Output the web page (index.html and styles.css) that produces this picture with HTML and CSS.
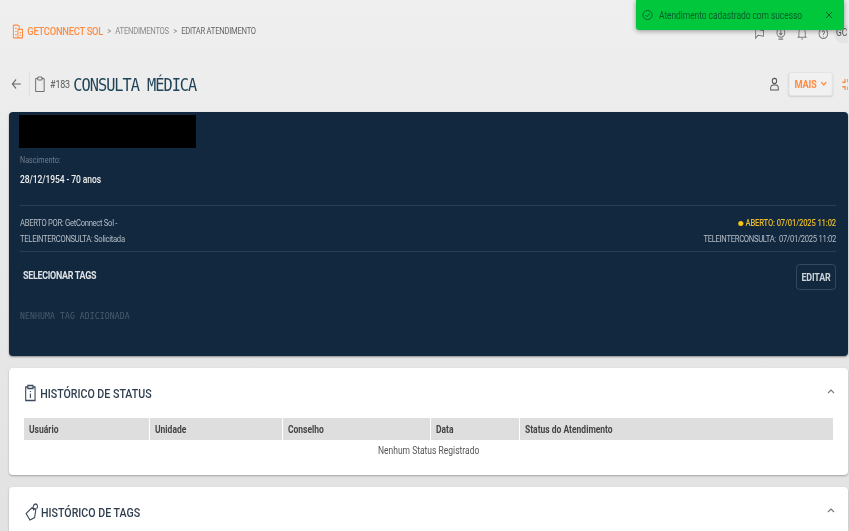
FILE: index.html
```html
<!DOCTYPE html>
<html lang="pt-BR">
<head>
    <meta charset="UTF-8">
    <meta name="viewport" content="width=device-width, initial-scale=1.0">
    <title>Editar atendimento</title>
    <link rel="stylesheet" href="styles.css">
</head>
<body>
    <div class="page">
        <header class="topbar">
            <nav class="crumbs squeeze">
                <svg class="crumb-icon" viewBox="0 0 12 14" width="14" height="15" fill="none" stroke="#ff8c42" stroke-width="1.1"><path d="M1 1h5l1.500 1.500V5M1 1v12h10V5H6v8M3 4h1.500M3 7h1.500M3 10h1.500M8 8h1.500M8 10.500h1.500"/></svg>
                <span class="crumb-brand">GETCONNECT SOL</span>
                <span class="crumb-sep">&gt;</span>
                <span class="crumb-link">ATENDIMENTOS</span>
                <span class="crumb-sep">&gt;</span>
                <span class="crumb-current">EDITAR ATENDIMENTO</span>
            </nav>
            <div class="top-icons squeeze-right">
                <svg viewBox="0 0 14 14" width="14" height="13" fill="none" stroke="#777" stroke-width="1.1"><path d="M2 2l10 2v6L5 9l-3 3zM2 2v10"/></svg>
                <svg viewBox="0 0 14 14" width="14" height="13" fill="none" stroke="#777" stroke-width="1.2"><circle cx="7" cy="6" r="5"/><path d="M7 3v5M5 6.500l2 2 2-2M4 13h6"/></svg>
                <svg viewBox="0 0 14 14" width="14" height="13" fill="none" stroke="#777" stroke-width="1.1"><path d="M3 10V6a4 4 0 0 1 8 0v4l1 1H2zM6 13h2"/></svg>
                <svg viewBox="0 0 14 14" width="14" height="13" fill="none" stroke="#777" stroke-width="1.1"><circle cx="7" cy="7" r="5.500"/><path d="M5.500 5.500a1.500 1.500 0 1 1 2 1.500L7 8.500M7 10v1"/></svg>
                <span class="avatar">GC</span>
            </div>
        </header>

        <div class="titlebar">
            <div class="title-left squeeze">
                <svg class="back" viewBox="0 0 12 12" width="13" height="12" fill="none" stroke="#666" stroke-width="1.1"><path d="M11 6H1M5.500 1.500L1 6l4.500 4.500"/></svg>
                <span class="title-div"></span>
                <svg class="clip" viewBox="0 0 12 16" width="12" height="16" fill="none" stroke="#666" stroke-width="1"><path d="M3.500 2.500H1v13h10v-13H8.500M3.500 4V1h5v3z"/></svg>
                <span class="ticket">#183</span>
                <h1 class="title">CONSULTA MÉDICA</h1>
            </div>
            <div class="title-actions squeeze-right">
                <svg viewBox="0 0 12 14" width="13" height="14" fill="none" stroke="#555" stroke-width="1.1"><circle cx="6" cy="4" r="2.600"/><path d="M1.500 13v-2a3 3 0 0 1 3-3h3a3 3 0 0 1 3 3v2z"/></svg>
                <button class="more">MAIS <svg viewBox="0 0 8 6" width="9" height="6" fill="none" stroke="#ff8c42" stroke-width="1.400"><path d="M1 1l3 3 3-3"/></svg></button>
                <svg viewBox="0 0 7 12" width="8" height="13" fill="none" stroke="#ff8c42" stroke-width="1.400"><path d="M1 4L4 4 4 1M7 1L7 4M1 8L4 8 4 11M7 8L7 11"/></svg>
            </div>
        </div>

        <section class="patient">
            <div class="redacted"></div>
            <div class="birth">
                <p class="birth-label squeeze">Nascimento:</p>
                <p class="birth-value squeeze">28/12/1954 - 70 anos</p>
            </div>
            <div class="opened">
                <div class="squeeze">
                    <p>ABERTO POR: GetConnect Sol -</p>
                    <p>TELEINTERCONSULTA: Solicitada</p>
                </div>
                <div class="opened-right squeeze-right">
                    <p class="opened-status"><span class="dot"></span>ABERTO: 07/01/2025 11:02</p>
                    <p>TELEINTERCONSULTA:&nbsp; 07/01/2025 11:02</p>
                </div>
            </div>
            <div class="tags-head">
                <span class="tags-title squeeze">SELECIONAR TAGS</span>
                <button class="edit squeeze-right">EDITAR</button>
            </div>
            <p class="tags-empty squeeze">NENHUMA TAG ADICIONADA</p>
        </section>

        <section class="card">
            <div class="card-head">
                <div class="card-title squeeze">
                    <svg viewBox="0 0 14 18" width="15" height="18" fill="none" stroke="#3b4a5a" stroke-width="1.300"><path d="M4 3H1.500v13.500h11V3H10M4 4.500V1.500h6v3zM7 7v1M7 9.500V14"/></svg>
                    <h2>HISTÓRICO DE STATUS</h2>
                </div>
                <svg class="caret" viewBox="0 0 8 6" width="8" height="6" fill="none" stroke="#777" stroke-width="1.100"><path d="M1 5l3-3 3 3"/></svg>
            </div>
            <table class="status-table">
                <thead>
                    <tr>
                        <th class="col-user"><span class="cell squeeze">Usuário</span></th>
                        <th class="col-unit"><span class="cell squeeze">Unidade</span></th>
                        <th class="col-board"><span class="cell squeeze">Conselho</span></th>
                        <th class="col-date"><span class="cell squeeze">Data</span></th>
                        <th><span class="cell squeeze">Status do Atendimento</span></th>
                    </tr>
                </thead>
                <tbody>
                    <tr><td colspan="5"><span class="cell squeeze-center">Nenhum Status Registrado</span></td></tr>
                </tbody>
            </table>
        </section>

        <section class="card">
            <div class="card-head">
                <div class="card-title squeeze">
                    <svg class="tag-icon" viewBox="0 0 16 18" width="18" height="18" fill="none" stroke="#3b4a5a" stroke-width="1.300"><path d="M8 5L1.500 10.500 6 17l5.500-2.500L13 6zM10.500 7.500C9 4.500 10 1 12.500 1s3 3 1.500 4.500"/></svg>
                    <h2>HISTÓRICO DE TAGS</h2>
                </div>
                <svg class="caret" viewBox="0 0 8 6" width="8" height="6" fill="none" stroke="#777" stroke-width="1.100"><path d="M1 5l3-3 3 3"/></svg>
            </div>
        </section>

        <div class="toast">
            <svg viewBox="0 0 12 12" width="11" height="12" fill="none" stroke="#07622a" stroke-width="1"><circle cx="6" cy="6" r="5"/><path d="M3.500 6l2 2 3-4"/></svg>
            <span class="toast-text squeeze">Atendimento cadastrado com sucesso</span>
            <svg class="toast-close" viewBox="0 0 8 8" width="8" height="8" fill="none" stroke="#07622a" stroke-width="1"><path d="M1 1l6 6M7 1L1 7"/></svg>
        </div>
    </div>
</body>
</html>
```

FILE: styles.css
```css
html, body {
    height: 100%;
}

body {
    margin: 0;
    overflow: hidden;
    background: linear-gradient(#efefef, #e2e2e2);
    font-family: Roboto, "Liberation Sans", sans-serif;
}

p, h1, h2 {
    margin: 0;
}

.page {
    position: relative;
    height: 531px;
    padding: 0 1px 0 9px;
    box-sizing: border-box;
    overflow: hidden;
    filter: blur(0.5px);
}

/* a captura original esta comprimida na horizontal */
.squeeze, .squeeze-right, .squeeze-center {
    transform: scaleX(0.85);
    transform-origin: left center;
}

.squeeze-right {
    transform-origin: right center;
}

.squeeze-center {
    transform-origin: center;
}

/* topo */
.topbar {
    display: flex;
    align-items: center;
    height: 38px;
    padding: 12px 0 0 3px;
}

.crumbs {
    display: flex;
    align-items: center;
    gap: 5px;
    font-size: 9px;
    letter-spacing: -0.3px;
    color: #8a8a8a;
}

.crumb-icon {
    margin-right: -1px;
}

.crumb-brand {
    font-size: 11px;
    font-weight: 500;
    letter-spacing: -0.3px;
    color: #ff8c42;
}

.crumb-current {
    color: #666;
}

.top-icons {
    display: flex;
    align-items: center;
    gap: 11px;
    margin: 4px 0 0 auto;
}

.avatar {
    width: 16px;
    height: 18px;
    margin: 2px 0 0 -5px;
    padding: 2px 0 0 2px;
    box-sizing: border-box;
    white-space: nowrap;
    border-radius: 9px 0 0 9px;
    background: #e4e4e4;
    font-size: 10px;
    letter-spacing: -0.2px;
    color: #555;
}

/* titulo */
.titlebar {
    display: flex;
    align-items: center;
    height: 32px;
    margin-top: 18px;
    padding-left: 2px;
}

.title-left {
    display: flex;
    align-items: center;
}

.title-div {
    width: 1px;
    height: 24px;
    margin: 0 6px 0 8px;
    background: #ddd;
}

.ticket {
    margin-left: 6px;
    font-size: 10.500px;
    letter-spacing: -0.2px;
    color: #555;
}

.title {
    margin-left: 4px;
    font-family: "DejaVu Sans Mono", monospace;
    font-size: 18px;
    font-weight: 400;
    letter-spacing: -1.2px;
    color: #1f4457;
}

.title-actions {
    display: flex;
    align-items: center;
    gap: 10px;
    margin-left: auto;
}

.more {
    display: flex;
    align-items: center;
    gap: 4px;
    width: 52px;
    height: 24px;
    padding: 0 0 0 6px;
    border: 1px solid #e2e2e2;
    border-radius: 3px;
    background: #f1f1f1;
    font-family: inherit;
    font-size: 11px;
    font-weight: 700;
    letter-spacing: -0.3px;
    color: #ff8c42;
    box-shadow: 0 1px 2px rgba(0, 0, 0, 0.12);
}

/* card escuro */
.patient {
    height: 244px;
    margin-top: 12px;
    padding: 3px 12px 0 11px;
    box-sizing: border-box;
    border-radius: 4px;
    background: #12283e;
    color: #e8e8e8;
    box-shadow: 0 1px 2px rgba(0, 0, 0, 0.4);
}

.redacted {
    width: 177px;
    height: 33px;
    margin-left: -1px;
    background: #000;
}

.birth {
    height: 58px;
    padding-top: 7px;
    box-sizing: border-box;
    border-bottom: 1px solid #26405a;
}

.birth-label {
    font-size: 8.500px;
    color: #6f7f8f;
}

.birth-value {
    margin-top: 9px;
    font-size: 10px;
    font-weight: 500;
    letter-spacing: -0.1px;
    color: #f0f0f0;
}

.opened {
    display: flex;
    justify-content: space-between;
    height: 46px;
    padding-top: 9px;
    box-sizing: border-box;
    border-bottom: 1px solid #26405a;
    font-size: 9px;
    letter-spacing: -0.35px;
    line-height: 16px;
    color: #b6bec7;
}

.opened > div {
    height: 32px;
}

.opened-right {
    text-align: right;
}

.opened-status {
    font-weight: 500;
    letter-spacing: -0.2px;
    color: #e8bb2c;
}

.dot {
    display: inline-block;
    width: 6px;
    height: 5px;
    margin-right: 3px;
    border-radius: 50%;
    background: #f5c518;
}

.tags-head {
    display: flex;
    justify-content: space-between;
    align-items: center;
    height: 50px;
    padding-left: 3px;
}

.tags-title {
    margin-top: -4px;
    font-size: 10.500px;
    font-weight: 700;
    letter-spacing: -0.35px;
    color: #dfe3e7;
}

.edit {
    width: 47px;
    height: 26px;
    padding: 0;
    border: 1px solid #3a4c60;
    border-radius: 4px;
    background: transparent;
    font-family: inherit;
    font-size: 10.500px;
    font-weight: 700;
    letter-spacing: -0.2px;
    color: #cdd3d9;
}

.tags-empty {
    margin-top: 8px;
    font-family: "DejaVu Sans Mono", monospace;
    font-size: 9.500px;
    letter-spacing: 0.15px;
    color: #4a5c6e;
}

/* cards brancos */
.card {
    height: 107px;
    margin-top: 12px;
    padding: 0 15px;
    box-sizing: border-box;
    border-radius: 4px;
    background: #fff;
    box-shadow: 0 1px 2px rgba(0, 0, 0, 0.3);
}

.card-head {
    display: flex;
    align-items: center;
    height: 50px;
}

.card-title {
    display: flex;
    align-items: center;
    gap: 4px;
}

.card-title h2 {
    font-size: 12.500px;
    font-weight: 500;
    color: #2f3e4e;
}

.tag-icon {
    margin-right: -2px;
}

.caret {
    margin: -4px -2px 0 auto;
}

.status-table {
    width: 100%;
    border-collapse: collapse;
    table-layout: fixed;
    font-size: 10px;
}

.status-table th {
    box-sizing: border-box;
    height: 22px;
    padding: 0 5px;
    border-left: 1px solid #fff;
    background: #dedede;
    font-weight: 700;
    text-align: left;
    color: #444;
}

.status-table th:first-child {
    border-left: 0;
}

.cell {
    display: inline-block;
}

.col-user {
    width: 125px;
}

.col-unit {
    width: 133px;
}

.col-board {
    width: 148px;
}

.col-date {
    width: 89px;
}

.status-table td {
    height: 20px;
    padding: 0;
    text-align: center;
    color: #555;
}

/* aviso */
.toast {
    position: absolute;
    top: 0;
    left: 636px;
    width: 208px;
    height: 30px;
    display: flex;
    align-items: center;
    gap: 6px;
    padding: 0 11px 0 6px;
    box-sizing: border-box;
    background: #00c73c;
    border-radius: 0 0 3px 3px;
    box-shadow: 0 1px 5px rgba(0, 0, 0, 0.4);
}

.toast-text {
    margin-right: -26px;
    white-space: nowrap;
    font-size: 10px;
    letter-spacing: -0.1px;
    color: #07622a;
}

.toast-close {
    margin-left: auto;
}
```
